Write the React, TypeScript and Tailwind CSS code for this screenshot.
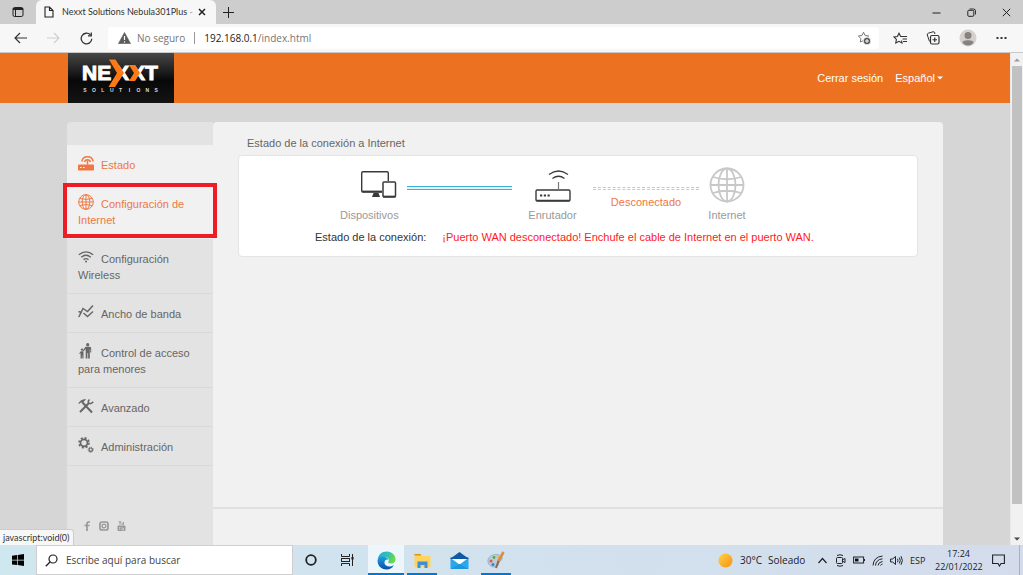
import type { ReactNode } from "react";

const ui = "font-['Open_Sans','Noto_Sans',sans-serif]";

function Svg({ w, h, box, children, className = "" }: { w: number; h: number; box?: string; children: ReactNode; className?: string }) {
  return (
    <svg width={w} height={h} viewBox={box ?? `0 0 ${w} ${h}`} fill="none" stroke="currentColor" aria-hidden="true" className={`shrink-0 ${className}`}>
      {children}
    </svg>
  );
}

function TabStrip() {
  return (
    <div className="flex h-6 items-stretch bg-[#cdcdcd] text-[#222]">
      <button aria-label="Menú de pestañas" className="flex w-9 items-center justify-center">
        <Svg w={12} h={12}>
          <rect x="1" y="1.5" width="10" height="9" rx="1.5" />
          <path d="M1 3h10" strokeWidth="2" />
          <path d="M3.5 3v7.5" />
        </Svg>
      </button>
      <div className="flex w-[180px] items-center rounded-t-md bg-[#f7f7f7] pr-2.5 pl-2">
        <Svg w={10} h={12}>
          <path d="M1 1h4.500L9 4.500V11H1zM5.500 1v3.500H9" strokeWidth="1.100" />
        </Svg>
        <span className="ml-2 flex-1 font-[Lato,'Open_Sans',sans-serif] text-[9px] leading-4 whitespace-nowrap text-[#333]">
          Nexxt Solutions Nebula301Plus <span className="text-[#999]">-</span>
        </span>
        <button aria-label="Cerrar pestaña" className="flex">
          <Svg w={8} h={8}><path d="M1 1l6 6M7 1L1 7" strokeWidth="1.500" /></Svg>
        </button>
      </div>
      <button aria-label="Nueva pestaña" className="flex w-6 items-center justify-center">
        <Svg w={11} h={11}><path d="M5.500 0v11M0 5.500h11" /></Svg>
      </button>
      <div className="ml-auto flex items-center gap-[26px] pr-3">
        <button aria-label="Minimizar"><Svg w={9} h={9}><path d="M.5 5h8" /></Svg></button>
        <button aria-label="Restaurar">
          <Svg w={9} h={9}><rect x=".8" y="2.300" width="6" height="6" rx="1" /><path d="M2.500 1h4a2 2 0 0 1 2 2v3.500" strokeWidth=".9" /></Svg>
        </button>
        <button aria-label="Cerrar"><Svg w={9} h={9}><path d="M.8.8l7.400 7.400M8.200.8L.8 8.200" /></Svg></button>
      </div>
    </div>
  );
}

const star = "M6.500 1.200l1.600 3.300 3.600.5-2.600 2.500.6 3.600-3.200-1.700-3.200 1.700.6-3.600L1.300 5l3.600-.5z";

function Toolbar() {
  return (
    <div className="flex h-[29px] items-center border-b border-[#c9c9c9] bg-[#f7f7f7] text-[#333]">
      <div className="flex w-[108px] items-center gap-5 pl-3.5">
        <button aria-label="Atrás"><Svg w={13} h={12}><path d="M6 1L1 6l5 5M1 6h12" strokeWidth="1.200" /></Svg></button>
        <button aria-label="Adelante" className="text-[#cfcfcf]"><Svg w={13} h={12}><path d="M7 1l5 5-5 5M12 6H0" strokeWidth="1.200" /></Svg></button>
        <button aria-label="Actualizar"><Svg w={13} h={13}><path d="M11.800 6.800A5.300 5.300 0 1 1 10.300 2.800M11.300.6v3.200H8" strokeWidth="1.300" /></Svg></button>
      </div>
      <div className="flex h-[22px] min-w-0 flex-1 items-center rounded-[3px] bg-white pr-2 pl-2.5 text-[10px] leading-4">
        <Svg w={13} h={12}><path d="M6.500.5l6 11H.5z" fill="#5b5b5b" stroke="#5b5b5b" strokeWidth=".6" /><path d="M6.500 4v4M6.500 9.200v1.200" stroke="#fff" strokeWidth="1.200" /></Svg>
        <span className="ml-1.5 text-[#757575]">No seguro</span>
        <span className="mx-[9px] h-3 w-px bg-[#999]" />
        <span role="textbox" aria-label="Dirección" className="flex-1 text-[#757575]"><span className="text-[#222]">192.168.0.1</span>/index.html</span>
        <button aria-label="Agregar a favoritos" className="text-[#777]">
          <Svg w={14} h={14}>
            <path d={star} strokeWidth="1" />
            <circle cx="10" cy="10" r="3.800" fill="#555" stroke="#fff" strokeWidth=".8" />
            <path d="M10 8v4M8 10h4" stroke="#fff" />
          </Svg>
        </button>
      </div>
      <div className="flex items-center gap-[19px] pr-4 pl-[14px]">
        <button aria-label="Favoritos">
          <Svg w={14} h={12}><path d="M8.500 8.500L9 11 6 9.300 2.800 11l.6-3.600L1 5l3.400-.5L6 1.200l1.600 3.300H14M9.500 7H14M10 9.500h4" strokeWidth="1.100" /></Svg>
        </button>
        <button aria-label="Colecciones">
          <Svg w={14} h={14}><path d="M3.500 10.500L1.300 4A1.500 1.500 0 0 1 2.300 2.200L7 .8a1.500 1.500 0 0 1 1.800 1V3" /><rect x="4.500" y="4.500" width="8.500" height="8.500" rx="1.500" strokeWidth="1.200" /><path d="M8.750 6.500v4.500M6.500 8.750h4.500" strokeWidth="1.200" /></Svg>
        </button>
        <button aria-label="Perfil">
          <Svg w={18} h={18}><circle cx="9" cy="9" r="8.500" fill="#d4d0ce" stroke="none" /><circle cx="9" cy="6.500" r="3.500" fill="#86817e" stroke="none" /><path d="M3.500 13.500c0-3 11-3 11 0-2 4-9 4-11 0z" fill="#86817e" stroke="none" /></Svg>
        </button>
        <button aria-label="Más"><Svg w={11} h={4}><path d="M.5 2h2M4.500 2h2M8.500 2h2" strokeWidth="2" /></Svg></button>
      </div>
    </div>
  );
}

function Logo() {
  return (
    <svg width="106" height="50" viewBox="0 0 106 50" role="img" aria-label="Nexxt Solutions">
      <defs>
        <linearGradient id="logo-bg" x1="0" y1="0" x2="0" y2="1">
          <stop offset="0" stopColor="#474747" />
          <stop offset=".4" stopColor="#1a1a1a" />
          <stop offset=".55" stopColor="#080808" />
          <stop offset="1" stopColor="#141414" />
        </linearGradient>
      </defs>
      <rect width="106" height="50" fill="url(#logo-bg)" />
      <g fill="#fff" stroke="#fff" strokeWidth="1" fontFamily="Liberation Sans, Arial, sans-serif" fontWeight="700" fontSize="21">
        <text x="14" y="27">NE</text>
        <text x="47" y="27">X</text>
        <text x="63" y="27">X</text>
        <text x="77" y="27">T</text>
      </g>
      <path d="M41 6.500h6.500L56 20l-9 14h-6.500L49 20z" fill="#ff7a16" />
      <path d="M61 12h6l5 8-5 8h-6l5-8z" fill="#ff7a16" />
      <g fill="#ddd" fontFamily="Liberation Sans, Arial, sans-serif" fontWeight="700" fontSize="5">
        {"SOLUTIONS".split("").map((c, i) => (
          <text key={i} x={17 + i * 8.9} y="39" textAnchor="middle">{c}</text>
        ))}
      </g>
    </svg>
  );
}

function GlobeLines({ s }: { s: number }) {
  return (
    <g strokeWidth={s}>
      <circle cx="18" cy="18" r="16.500" />
      <ellipse cx="18" cy="18" rx="8.500" ry="16.500" />
      <path d="M18 1.500v33M1.500 18h33M4 10q14 4.500 28 0M4 26q14-4.500 28 0" />
    </g>
  );
}

const icons: Record<string, ReactNode> = {
  router: (
    <>
      <rect x="0" y="9.500" width="16" height="6" rx=".8" fill="currentColor" stroke="none" />
      <path d="M9.500 9.500V5.500" strokeWidth="1.500" />
      <path d="M3.800 6.500a5.800 5.800 0 0 1 11.400 0M6.500 7a3.100 3.100 0 0 1 6 0" strokeWidth="1.400" />
      <path d="M2 12.500h1.500M5 12.500h1.500" stroke="#fff" strokeWidth="1.200" />
    </>
  ),
  globe: <g transform="scale(.444)"><GlobeLines s={2.2} /></g>,
  wifi: (
    <>
      <path d="M.8 5.800q7.200-5.800 14.400 0M3.200 8.300q4.800-4 9.600 0M5.500 10.600q2.500-2 5 0" strokeWidth="1.400" />
      <circle cx="8" cy="12.500" r="1" fill="currentColor" stroke="none" />
    </>
  ),
  chart: (
    <>
      <path d="M.8 13L5 4.500l4.500 3L15 1.500" strokeWidth="1.500" />
      <path d="M.5 7.500l3 1M5.500 9l4 3.500 5.500-5" strokeWidth="1.400" />
    </>
  ),
  family: (
    <g fill="currentColor" stroke="none">
      <circle cx="9.700" cy="1.700" r="1.600" />
      <path d="M7.500 3.800h4.400q1.300.2 1.300 1.600v4h-1V6h-.4v9.500h-1.700V10h-.7v5.500H7.700V6L5.500 8.200l-.6-.8z" />
      <circle cx="4" cy="6.600" r="1.200" />
      <path d="M2.800 8.200h2.700v7.300H4.300v-3h-.4v3H2.600V10l-.7 1-.7-.5z" />
    </g>
  ),
  tools: (
    <>
      <path d="M4.500 4.500L14 14.500" strokeWidth="2" />
      <path d="M2 14L11 5" strokeWidth="2" />
      <path d="M.8 5.500Q2 2 7.500 1.500L4.500 4.500 3 4z" fill="currentColor" strokeWidth=".8" />
      <path d="M11.500 1.500q-2 1.500-.8 3.500 2.200 1.700 4.500-1.200" strokeWidth="1.500" />
    </>
  ),
  gears: (
    <>
      <circle cx="6" cy="5.800" r="3.500" strokeWidth="1.700" />
      <circle cx="6" cy="5.800" r="5" strokeWidth="1.600" strokeDasharray="2 1.927" />
      <circle cx="12.700" cy="12.700" r="1.700" strokeWidth="1.200" />
      <circle cx="12.700" cy="12.700" r="2.600" strokeWidth=".9" strokeDasharray="1 1.042" />
    </>
  ),
};

const items = [
  { icon: "router", label: "Estado", state: "current" },
  { icon: "globe", label: "Configuración de Internet", state: "marked" },
  { icon: "wifi", label: "Configuración Wireless", state: "" },
  { icon: "chart", label: "Ancho de banda", state: "" },
  { icon: "family", label: "Control de acceso para menores", state: "" },
  { icon: "tools", label: "Avanzado", state: "" },
  { icon: "gears", label: "Administración", state: "" },
];

function Sidebar() {
  return (
    <aside className="flex w-[146px] shrink-0 flex-col rounded-tl bg-[#e3e3e3] pt-[23px]">
      <nav aria-label="Principal">
        {items.map((it) => (
          <a
            key={it.label}
            href="#"
            className={`relative block border-b px-[11px] pt-3 pb-2.5 text-[11px] leading-4 ${it.state ? "border-[#f1f1f1] bg-[#f1f1f1] text-[#ee7843]" : "border-[#d9d9d9] text-[#666]"}`}
          >
            <Svg w={16} h={16} className="-mt-2 mr-[7px] inline-block h-4 w-4 align-[-2px]">{icons[it.icon]}</Svg>
            {it.label}
            {it.state === "marked" && <span className="pointer-events-none absolute -inset-x-1 -top-px bottom-0 z-10 border-4 border-[#ee1c25]" />}
          </a>
        ))}
      </nav>
      <div className="mt-auto flex gap-2 pb-3.5 pl-4 text-[#999]">
        <a href="#" aria-label="Facebook">
          <Svg w={8} h={10}><path d="M7 1H5.500Q4 1 4 3v7M1.500 4.500h5" strokeWidth="1.700" /></Svg>
        </a>
        <a href="#" aria-label="Instagram">
          <Svg w={10} h={10}><rect x="1" y="1" width="8" height="8" rx="2" strokeWidth="1.700" /><circle cx="5" cy="5" r="1.900" strokeWidth="1.300" /></Svg>
        </a>
        <a href="#" aria-label="YouTube">
          <Svg w={9} h={10}><rect x=".5" y="4.500" width="8" height="5.500" rx="1" fill="currentColor" stroke="none" /><path d="M2 0l1 2v2M4 0L3 2M5 1.500v2h1.500V1" strokeWidth=".9" /><path d="M2 6.500h1.500M2.700 6.500v2.500M5 6v3h1.500V7" stroke="#e3e3e3" strokeWidth=".6" /></Svg>
        </a>
      </div>
    </aside>
  );
}

function ConnectionCard() {
  return (
    <section className="rounded border border-[#e4e4e4] bg-white pt-[11px] pb-[11px] text-[11px] leading-4">
      <div className="flex pl-[101px] text-[#999]">
        <div className="w-[67px]">
          <div className="flex h-9 items-center pl-5 text-[#3a3a3a]">
            <Svg w={37} h={30}>
              <path d="M22 22H3q-1.300 0-1.300-1.300V3Q1.700 1.700 3 1.700h24q1.300 0 1.300 1.300v8" strokeWidth="1.400" />
              <path d="M2 21.500h20" strokeWidth="1.800" />
              <path d="M12 27l1.500-4h5l1.500 4z" fill="currentColor" stroke="none" />
              <rect x="23" y="12" width="12.500" height="15" rx="1" strokeWidth="1.500" />
              <path d="M23 26.500h12.500" strokeWidth="1.700" />
            </Svg>
          </div>
          <p className="mt-1">Dispositivos</p>
        </div>
        <div className="w-[105px] pt-[19px]"><div className="h-1 border-y border-[#38b0d8] bg-[#e2f4fa]" /></div>
        <div className="flex w-[81px] flex-col items-center">
          <div className="flex h-9 items-end text-[#3a3a3a]">
            <Svg w={36} h={34}>
              <rect x="1" y="21" width="34" height="11" rx="1.200" strokeWidth="1.400" />
              <path d="M1.500 31.500h33" strokeWidth="1.600" />
              <path d="M5 26.500h2.200M8.800 26.500H11M12.500 26.500h2.200" strokeWidth="2.200" />
              <path d="M23.500 13v8" strokeWidth="1.200" stroke="#777" />
              <path d="M14 5.500q9.500-7 19 0M17.500 9.500q6-4.500 12 0" strokeWidth="1.300" />
            </Svg>
          </div>
          <p className="mt-1">Enrutador</p>
        </div>
        <div className="w-[106px] pt-5 text-center">
          <div className="h-[3px] border-y border-dashed border-[#c8c8c8]" />
          <p className="mt-1 text-[#ee7843]">Desconectado</p>
        </div>
        <div className="flex w-14 flex-col items-center">
          <Svg w={36} h={36} className="text-[#c8c8c8]"><GlobeLines s={1.8} /></Svg>
          <p className="mt-1">Internet</p>
        </div>
      </div>
      <p className="mt-1.5 flex gap-4 pl-[76px] text-[#333]">
        <span>Estado de la conexión:</span>
        <span className="text-[#ff1a1a]">¡Puerto WAN desconectado! Enchufe el cable de Internet en el puerto WAN.</span>
      </p>
    </section>
  );
}

function RouterPage() {
  return (
    <div className="flex min-w-0 flex-1 flex-col bg-[#d6d6d6]">
      <header className="bg-[#ec7120]">
        <div className="mx-auto flex w-full max-w-[876px] items-center pl-px">
          <Logo />
          <div className="ml-auto flex gap-3 text-[11px] leading-4 text-white">
            <a href="#">Cerrar sesión</a>
            <button className="flex items-center gap-0.5">
              Español
              <Svg w={6} h={4}><path d="M0 .5h6l-3 3z" fill="#fff" stroke="none" /></Svg>
            </button>
          </div>
        </div>
      </header>
      <div className="mx-auto flex w-full max-w-[876px] flex-1 pt-[19px]">
        <Sidebar />
        <main className="flex min-w-0 flex-1 flex-col rounded-t bg-[#f1f1f1]">
          <div className="flex-1 px-[25px] pt-[13px]">
            <h1 className="mb-1 pl-[9px] text-[11px] leading-4 text-[#666]">Estado de la conexión a Internet</h1>
            <ConnectionCard />
          </div>
          <footer className="h-[38px] border-t-2 border-[#e0e0e0]" />
        </main>
      </div>
    </div>
  );
}

function Scrollbar() {
  return (
    <div className="flex w-[13px] flex-col items-center border-l border-[#e8e8e8] bg-[#f1f1f1]" aria-hidden="true">
      <div className="flex h-[13px] items-center"><Svg w={6} h={4}><path d="M0 3.500h6l-3-3z" fill="#999" stroke="none" /></Svg></div>
      <div className="w-[10px] flex-1 bg-[#c1c1c1]" />
      <div className="flex h-[41px] items-end pb-1"><Svg w={6} h={4}><path d="M0 .5h6l-3 3z" fill="#444" stroke="none" /></Svg></div>
    </div>
  );
}

function Taskbar() {
  return (
    <div className="flex h-[30px] items-stretch bg-linear-to-r from-[#cfe7ef] to-[#d4dcec] text-[#222]">
      <button aria-label="Inicio" className="flex w-9 items-center justify-center">
        <Svg w={12} h={12}><path d="M0 1.700l5-.7v4.700H0zM5.700.9L12 0v5.700H5.700zM0 6.400h5v4.700l-5-.7zM5.700 6.400H12V12l-6.300-.9z" fill="#000" stroke="none" /></Svg>
      </button>
      <label className="flex w-[257px] items-center border border-[#cfcfcf] bg-white pl-2">
        <Svg w={13} h={13}><circle cx="8" cy="5" r="4" strokeWidth="1.200" /><path d="M5 8L.8 12.200" strokeWidth="1.300" /></Svg>
        <input type="search" aria-label="Buscar" placeholder="Escribe aquí para buscar" className="ml-2 min-w-0 flex-1 text-[10px] leading-4 outline-none placeholder:text-[#444]" />
      </label>
      <button aria-label="Cortana" className="flex w-9 items-center justify-center"><Svg w={12} h={12}><circle cx="6" cy="6" r="4.800" strokeWidth="1.800" /></Svg></button>
      <button aria-label="Vista de tareas" className="flex w-9 items-center justify-center">
        <Svg w={13} h={12}><path d="M.5 0v2.500h8V0M.5 12V9.500h8V12" /><rect x=".5" y="4.500" width="8" height="3" /><path d="M11.500 0v12" /><path d="M11.500 3v2.500" strokeWidth="2.200" /></Svg>
      </button>
      <button aria-label="Microsoft Edge" className="ml-[3px] flex w-9 items-center justify-center border-b-2 border-[#0078d7] bg-[#edf6fa] pt-0.5">
        <Svg w={19} h={19}>
          <defs>
            <linearGradient id="edge-a" x1="0" y1="0" x2="1" y2=".3"><stop offset="0" stopColor="#22a8e0" /><stop offset=".6" stopColor="#35c1b0" /><stop offset="1" stopColor="#6bd84a" /></linearGradient>
            <linearGradient id="edge-b" x1="0" y1="0" x2="0" y2="1"><stop offset="0" stopColor="#1f9fe0" /><stop offset="1" stopColor="#0b50a5" /></linearGradient>
          </defs>
          <path d="M.7 8.200C1.500 3.200 5.200.5 9.700.5c5.500 0 8.800 4 8.800 7.700 0 3-2.300 4.300-4.300 4.300-2.600 0-3.400-1-2.700-2 1.200-2-.5-4.500-4-4.500C4 6 1.500 7 .7 8.200z" fill="url(#edge-a)" stroke="none" />
          <path d="M.6 9C1.200 6.500 4 5.300 7 5.700c2.800.3 4.300 2 4.200 3.200-1.500-1.200-4 .2-3.700 3 .3 3.300 5 4.900 9.300 2.300-1.500 3-4.300 4.300-7.300 4.300C4 18.500 0 14 .6 9z" fill="url(#edge-b)" stroke="none" />
        </Svg>
      </button>
      <button aria-label="Explorador de archivos" className="ml-[3px] flex w-[30px] items-center justify-center border-b-2 border-[#0078d7] pt-0.5">
        <Svg w={17} h={15}><path d="M.5 1h6l1.500 2h8.500v11H.5z" fill="#ffd45e" stroke="none" /><path d="M.5 1h6l1 1.500H.5z" fill="#d9951a" stroke="none" /><path d="M3.500 15V8.500h10V15h-3v-3h-4v3z" fill="#3f8fd6" stroke="none" /></Svg>
      </button>
      <button aria-label="Correo" className="ml-[7px] flex w-[30px] items-center justify-center">
        <Svg w={19} h={17}><path d="M.5 6.500L9.500 0l9 6.500z" fill="#1259a5" stroke="none" /><path d="M.5 6.500h18V17H.5z" fill="#2aa8ec" stroke="none" /><path d="M.5 5.500h18v1.500h-18z" fill="#1259a5" stroke="none" /><path d="M2 7h15l-7.500 5.500z" fill="#fff" stroke="none" /><path d="M.5 17l9-5 9 5z" fill="#1d96e2" stroke="none" /></Svg>
      </button>
      <button aria-label="Paint" className="ml-[7px] flex w-[30px] items-center justify-center border-b-2 border-[#0078d7] pt-0.5">
        <Svg w={18} h={18}><path d="M1 11C0 6.500 5 3 10 3.500c4 .4 6 3 5 5-1 1.500-3 1-3 3 0 3-2.500 4.800-5.500 4.500C3.500 15.700 1.500 13.500 1 11z" fill="#b9cddb" stroke="#8fa5b5" strokeWidth=".7" /><circle cx="4" cy="10" r="1.500" fill="#e2574c" stroke="none" /><circle cx="7" cy="6.500" r="1.400" fill="#58a84a" stroke="none" /><circle cx="11" cy="6" r="1.300" fill="#f0bd34" stroke="none" /><circle cx="6" cy="13.500" r="1.500" fill="#3b83cd" stroke="none" /><path d="M16.500 1L11 11" stroke="#d98a4c" strokeWidth="2.600" /><path d="M11.500 10L9 17" stroke="#8d6a4d" strokeWidth="2" /></Svg>
      </button>
      <div className="ml-auto flex items-center text-[10px] leading-[13px]">
        <Svg w={15} h={15}><defs><linearGradient id="sun" x1="0" y1="0" x2="1" y2="1"><stop offset="0" stopColor="#ffd24a" /><stop offset="1" stopColor="#f7900e" /></linearGradient></defs><circle cx="7.500" cy="7.500" r="7" fill="url(#sun)" stroke="none" /></Svg>
        <span className="ml-[7px] w-7">30°C</span>
        <span className="w-[41px]">Soleado</span>
        <div className="ml-2 flex items-center gap-[7px]">
          <Svg w={11} h={7}><path d="M1.500 6l4-4.500 4 4.500" strokeWidth="1.200" /></Svg>
          <Svg w={11} h={13}><rect x="1.500" y="3.500" width="6" height="6" rx="1" /><path d="M8 5.500l2-1v4l-2-1M2 1.500q3-1.500 6 0M2 11.500q3 1.500 6 0" /></Svg>
          <Svg w={12} h={8}><rect x=".6" y="1" width="10" height="6" /><path d="M11.500 3v2" /><rect x="2" y="2.500" width="3.500" height="3" fill="#111" stroke="none" /></Svg>
          <Svg w={11} h={11}><path d="M1 10.500Q1.500 2 10.500 1M3.500 10.500Q4 4.500 10.500 3.800M6 10.500q.5-3.500 4.500-4M8.500 10.500q.5-1.200 2-1.500" /></Svg>
          <Svg w={13} h={11}><path d="M.6 4v3h2L5.500 9.500v-8L2.600 4zM7.500 3.800q1 1.700 0 3.400M9.300 2.500q2 3 0 6M11 1.200q2.800 4.300 0 8.600" /></Svg>
        </div>
        <span className="ml-[7px] w-[19px] text-[9px]">ESP</span>
        <div className="ml-1.5 w-[47px] text-center text-[9px] whitespace-nowrap"><div>17:24</div><div>22/01/2022</div></div>
        <button aria-label="Notificaciones" className="ml-2.5"><Svg w={13} h={13}><path d="M.6 1h11.800v8.500H9L7.500 12 6 9.500H.6z" strokeWidth="1.100" /></Svg></button>
        <span className="mr-[3px] ml-3.5 h-[30px] w-px bg-[#a9b3c0]" />
      </div>
    </div>
  );
}

export default function App() {
  return (
    <div className={`flex min-h-screen flex-col ${ui}`}>
      <TabStrip />
      <Toolbar />
      <div className="relative flex flex-1 font-['Liberation_Sans',Arial,sans-serif]">
        <RouterPage />
        <Scrollbar />
        <div className="absolute bottom-0 left-0 rounded-tr border-t border-r border-[#ccc] bg-[#f7f7f7] px-[3px] font-[Lato,'Open_Sans',sans-serif] text-[9px] leading-[15px] text-[#333]">javascript:void(0)</div>
      </div>
      <Taskbar />
    </div>
  );
}
